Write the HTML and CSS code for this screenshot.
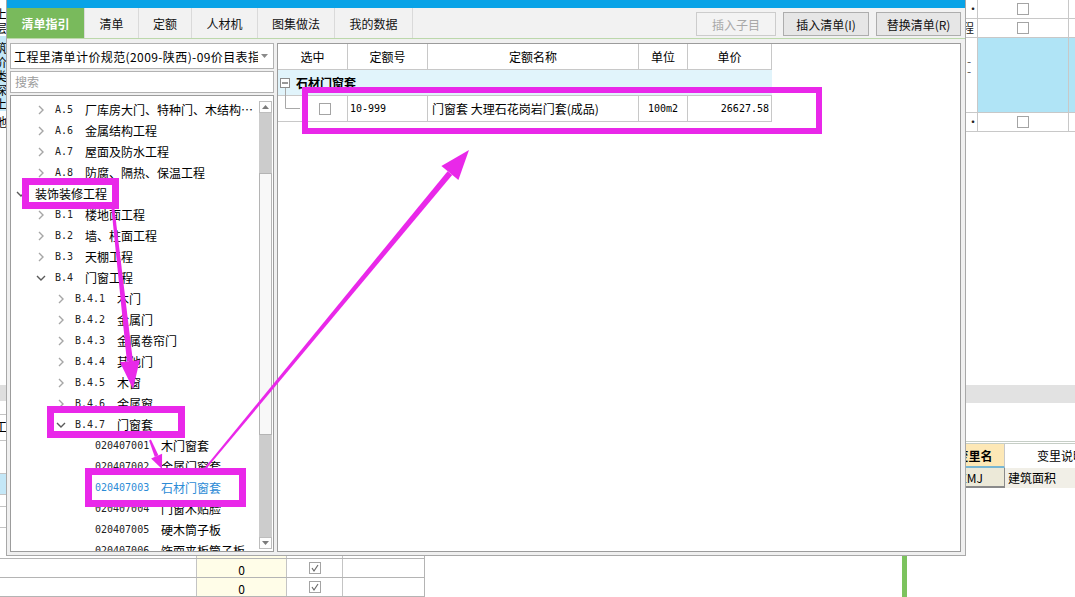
FILE: index.html
```html
<!DOCTYPE html>
<html lang="zh-CN">
<head>
<meta charset="utf-8">
<title>清单指引</title>
<link rel="stylesheet" href="styles.css">
</head>
<body>
<div class="screen">
  <div class="backdrop">
    <div class="bg-left">
      <div class="edge">
        <div class="edge-top"><span>上层</span></div>
        <div class="edge-blue"><span>筑价类深上</span></div>
        <div class="edge-plain"><span>地</span></div>
        <div class="edge-bar"></div>
        <div class="edge-line h14"></div>
        <div class="edge-line h26"><span>工</span></div>
        <div class="edge-line h33"></div>
        <div class="edge-line h21 blue"></div>
        <div class="edge-line h12"></div>
        <div class="edge-line h21"></div>
      </div>
    </div>

    <div class="bg-right">
      <div class="rt">
        <div class="rt-row r19"><div class="c0"></div><div class="c1">·</div><div class="c2"><span class="cb"></span></div><div class="c3"></div></div>
        <div class="rt-row r19"><div class="c0"></div><div class="c1 cut">程</div><div class="c2"><span class="cb"></span></div><div class="c3"></div></div>
        <div class="rt-row r75 sel"><div class="c0"></div><div class="c1 dash"><span>-</span><span>-</span></div><div class="c2"></div><div class="c3"></div></div>
        <div class="rt-row r19"><div class="c0"></div><div class="c1">·</div><div class="c2"><span class="cb"></span></div><div class="c3"></div></div>
      </div>
      <div class="rt-bar"></div>
      <div class="vars">
        <div class="vrow head"><div class="vname">变里名</div><div class="vdesc">变里说明</div></div>
        <div class="vrow data"><div class="vname">JZMJ</div><div class="vdesc">建筑面积</div></div>
      </div>
    </div>

    <div class="bg-bottom">
      <div class="bt">
        <div class="bt-row first">
          <div class="bc w1"></div>
          <div class="bc w2 yel"><span class="inner">0</span></div>
          <div class="bc w3"><span class="inner"><span class="cb on"><svg viewBox="0 0 10 10" width="10" height="10"><polyline points="2,5 4,8 8,2" fill="none" stroke="#6a6a6a" stroke-width="1.2"/></svg></span></span></div>
          <div class="bc w4"></div>
        </div>
        <div class="bt-row">
          <div class="bc w1"></div>
          <div class="bc w2 yel"><span class="val">0</span></div>
          <div class="bc w3"><span class="cb on"><svg viewBox="0 0 10 10" width="10" height="10"><polyline points="2,5 4,8 8,2" fill="none" stroke="#6a6a6a" stroke-width="1.2"/></svg></span></div>
          <div class="bc w4"></div>
        </div>
        <div class="bt-row">
          <div class="bc w1"></div>
          <div class="bc w2 yel"><span class="val">0</span></div>
          <div class="bc w3"><span class="cb on"><svg viewBox="0 0 10 10" width="10" height="10"><polyline points="2,5 4,8 8,2" fill="none" stroke="#6a6a6a" stroke-width="1.2"/></svg></span></div>
          <div class="bc w4"></div>
        </div>
      </div>
      <div class="green-line"></div>
    </div>
  </div>

  <div class="dialog">
    <div class="titlebar"></div>
    <div class="tabbar">
      <div class="tab active t1">清单指引</div>
      <div class="tab t2">清单</div>
      <div class="tab t3">定额</div>
      <div class="tab t4">人材机</div>
      <div class="tab t5">图集做法</div>
      <div class="tab t6">我的数据</div>
      <div class="actions">
        <button class="btn disabled b1">插入子目</button>
        <button class="btn b2">插入清单(I)</button>
        <button class="btn b3">替换清单(R)</button>
      </div>
    </div>
    <div class="body">
      <div class="left">
        <div class="combo">
          <span class="combo-text">工程里清单计价规范(2009-陕西)-09价目表指引</span>
          <svg class="combo-arrow" viewBox="0 0 7 4" width="7" height="4"><polygon points="0,0 7,0 3.5,4" fill="#8a8a8a"/></svg>
        </div>
        <div class="search">搜索</div>
        <div class="tree">
          <div class="tree-list">
            <div class="node l2"><svg class="chev" viewBox="0 0 12 12"><polyline points="4,2 8,6 4,10" /></svg><span class="code">A.5</span><span class="name">厂库房大门、特种门、木结构…</span></div>
            <div class="node l2"><svg class="chev" viewBox="0 0 12 12"><polyline points="4,2 8,6 4,10" /></svg><span class="code">A.6</span><span class="name">金属结构工程</span></div>
            <div class="node l2"><svg class="chev" viewBox="0 0 12 12"><polyline points="4,2 8,6 4,10" /></svg><span class="code">A.7</span><span class="name">屋面及防水工程</span></div>
            <div class="node l2"><svg class="chev" viewBox="0 0 12 12"><polyline points="4,2 8,6 4,10" /></svg><span class="code">A.8</span><span class="name">防腐、隔热、保温工程</span></div>
            <div class="node l1"><svg class="chev open" viewBox="0 0 12 12"><polyline points="2,4 6,8 10,4" /></svg><span class="name">装饰装修工程</span></div>
            <div class="node l2"><svg class="chev" viewBox="0 0 12 12"><polyline points="4,2 8,6 4,10" /></svg><span class="code">B.1</span><span class="name">楼地面工程</span></div>
            <div class="node l2"><svg class="chev" viewBox="0 0 12 12"><polyline points="4,2 8,6 4,10" /></svg><span class="code">B.2</span><span class="name">墙、柱面工程</span></div>
            <div class="node l2"><svg class="chev" viewBox="0 0 12 12"><polyline points="4,2 8,6 4,10" /></svg><span class="code">B.3</span><span class="name">天棚工程</span></div>
            <div class="node l2"><svg class="chev open" viewBox="0 0 12 12"><polyline points="2,4 6,8 10,4" /></svg><span class="code">B.4</span><span class="name">门窗工程</span></div>
            <div class="node l3"><svg class="chev" viewBox="0 0 12 12"><polyline points="4,2 8,6 4,10" /></svg><span class="code">B.4.1</span><span class="name">木门</span></div>
            <div class="node l3"><svg class="chev" viewBox="0 0 12 12"><polyline points="4,2 8,6 4,10" /></svg><span class="code">B.4.2</span><span class="name">金属门</span></div>
            <div class="node l3"><svg class="chev" viewBox="0 0 12 12"><polyline points="4,2 8,6 4,10" /></svg><span class="code">B.4.3</span><span class="name">金属卷帘门</span></div>
            <div class="node l3"><svg class="chev" viewBox="0 0 12 12"><polyline points="4,2 8,6 4,10" /></svg><span class="code">B.4.4</span><span class="name">其他门</span></div>
            <div class="node l3"><svg class="chev" viewBox="0 0 12 12"><polyline points="4,2 8,6 4,10" /></svg><span class="code">B.4.5</span><span class="name">木窗</span></div>
            <div class="node l3"><svg class="chev" viewBox="0 0 12 12"><polyline points="4,2 8,6 4,10" /></svg><span class="code">B.4.6</span><span class="name">金属窗</span></div>
            <div class="node l3"><svg class="chev open" viewBox="0 0 12 12"><polyline points="2,4 6,8 10,4" /></svg><span class="code">B.4.7</span><span class="name">门窗套</span></div>
            <div class="node l4"><span class="code">020407001</span><span class="name">木门窗套</span></div>
            <div class="node l4"><span class="code">020407002</span><span class="name">金属门窗套</span></div>
            <div class="node l4 selected"><span class="code">020407003</span><span class="name">石材门窗套</span></div>
            <div class="node l4"><span class="code">020407004</span><span class="name">门窗木贴脸</span></div>
            <div class="node l4"><span class="code">020407005</span><span class="name">硬木筒子板</span></div>
            <div class="node l4"><span class="code">020407006</span><span class="name">饰面夹板筒子板</span></div>
          </div>
          <div class="sb">
            <div class="sb-btn"><svg viewBox="0 0 7 4" width="7" height="4"><polygon points="0,4 7,4 3.5,0" fill="#7a7a7a"/></svg></div>
            <div class="sb-track">
              <div class="sb-pre"></div>
              <div class="sb-thumb"></div>
            </div>
            <div class="sb-btn"><svg viewBox="0 0 7 4" width="7" height="4"><polygon points="0,0 7,0 3.5,4" fill="#7a7a7a"/></svg></div>
          </div>
        </div>
      </div>
      <div class="right">
        <div class="grid head">
          <div>选中</div><div>定额号</div><div>定额名称</div><div>单位</div><div>单价</div>
        </div>
        <div class="group">
          <svg class="minus" viewBox="0 0 10 10" width="10" height="10"><rect x="0.5" y="0.5" width="9" height="9" fill="#fff" stroke="#8c8c8c"/><line x1="2" y1="5" x2="8" y2="5" stroke="#333"/></svg>
          <span class="group-title">石材门窗套</span>
          <span class="stem"></span>
        </div>
        <div class="grid row">
          <div class="sel-cell"><svg class="conn" viewBox="0 0 22 26" width="22" height="26"><polyline points="7.5,0 7.5,12.5 22,12.5" fill="none" stroke="#a8a8a8"/></svg><span class="cb"></span></div>
          <div class="num">10-999</div>
          <div class="txt">门窗套 大理石花岗岩门套(成品)</div>
          <div class="unit">100m2</div>
          <div class="price">26627.58</div>
        </div>
      </div>
    </div>
  </div>

  <svg class="annot" viewBox="0 0 1075 597" width="1075" height="597">
    <g fill="none" stroke="#e928e9">
      <rect x="305" y="90" width="514" height="41" stroke-width="6"/>
      <rect x="25.5" y="181.5" width="90" height="24" stroke-width="7"/>
      <rect x="50.5" y="409.5" width="131" height="25" stroke-width="7"/>
      <rect x="88.5" y="471.5" width="154" height="32" stroke-width="7"/>
    </g>
    <g fill="#e928e9">
      <polygon points="111.5,209.2 114.5,208.8 132.9,360.9 126.9,361.5"/>
      <polygon points="120,362.3 139.8,360.1 133,389"/>
      <polygon points="150.9,439.6 149.1,440.4 154.8,456.9 158.4,455.3"/>
      <polygon points="162.1,453.8 151.1,458.4 162,469"/>
      <polygon points="204.8,470.6 203.2,469.4 447.6,171.2 452.2,175"/>
      <polygon points="458.4,180.1 441.4,166.1 469,150"/>
    </g>
  </svg>
</div>
</body>
</html>
```
FILE: styles.css
```css
* { box-sizing: border-box; margin: 0; padding: 0; }
html, body { width: 1075px; height: 597px; overflow: hidden; background: #fff; }
body {
  font-family: "Noto Sans CJK SC", "Noto Sans", sans-serif;
  font-size: 12px;
  color: #000;
}
.screen { position: relative; width: 1075px; height: 597px; overflow: hidden; }

/* ---------- background application ---------- */
.backdrop {
  display: grid;
  grid-template-columns: 945px 130px;
  grid-template-rows: 555px 42px;
  width: 1075px;
  height: 597px;
}
.bg-left { grid-column: 1; grid-row: 1; overflow: hidden; }
.bg-right { grid-column: 2; grid-row: 1 / 3; overflow: hidden; display: flex; flex-direction: column; }
.bg-bottom { grid-column: 1; grid-row: 2; display: flex; overflow: hidden; }

.edge { width: 6px; height: 555px; overflow: hidden; display: flex; flex-direction: column; }
.edge span { display: block; margin-left: -5px; width: 12px; line-height: 14px; word-break: break-all; }
.edge-top { height: 36px; padding-top: 7px; }
.edge-blue { height: 75px; background: #c4e7f7; padding-top: 5px; }
.edge-plain { height: 20px; padding-top: 4px; }
.edge-bar { margin-top: 254px; height: 16px; background: #dedede; }
.edge-line { border-bottom: 1px solid #c4c4c4; }
.edge-line span { line-height: 24px; }
.edge-line.h14 { height: 14px; }
.edge-line.h26 { height: 26px; }
.edge-line.h33 { height: 33px; }
.edge-line.h21 { height: 21px; }
.edge-line.h12 { height: 12px; }
.edge-line.blue { background: #c4e7f7; }

.rt { display: flex; flex-direction: column; }
.rt-row { display: flex; border-bottom: 1px solid #c8c8c8; }
.rt-row.r19 { height: 19px; }
.rt-row.r75 { height: 75px; }
.rt-row .c0 { width: 21px; border-right: 1px solid #c8c8c8; }
.rt-row .c1 { width: 12px; border-right: 1px solid #c8c8c8; line-height: 18px; padding-left: 1px; overflow: hidden; color: #222; }
.rt-row .c1.cut { text-indent: -5px; }
.rt-row .c1.dash { display: flex; flex-direction: column; padding-top: 18px; line-height: 10px; color: #555; }
.rt-row .c2 { width: 91px; border-right: 1px solid #c8c8c8; display: flex; align-items: center; justify-content: center; }
.rt-row .c3 { flex: 1; }
.rt-row.sel .c2, .rt-row.sel .c3 { background: #b0e4f6; }
.rt-bar { margin-top: 253px; height: 18px; background: #e2e2e2; }
.vars { margin-top: 38px; border-top: 3px double #c6cec6; }
.vrow { display: flex; width: 172px; }
.vrow.head { height: 24px; }
.vrow.data { height: 20px; background: #f1efe7; }
.vname { width: 60px; flex: none; border-right: 1px solid #c8c8c8; }
.vdesc { width: 112px; flex: none; }
.head .vname { background: #fde8b6; font-weight: bold; text-align: center; line-height: 23px; font-size: 12px; border-bottom: 2px solid #78b6d2; }
.head .vdesc { text-align: center; line-height: 23px; background: #fff; }
.data .vname { background: #ece9d8; padding-left: 8px; line-height: 19px; border-right: 1px solid #8a8a8a; border-bottom: 2px solid #8a8a8a; }
.data .vdesc { padding-left: 3px; line-height: 19px; }

.cb { display: inline-flex; align-items: center; justify-content: center; width: 12px; height: 12px; border: 1px solid #a4a4a4; background: #fff; flex: none; }

.bt { width: 425px; flex: none; display: flex; flex-direction: column; }
.bt-row { display: flex; height: 19px; border-bottom: 1px solid #b4b4b4; }
.bt-row.first { height: 9px; overflow: hidden; }
.bc { display: flex; align-items: center; justify-content: center; height: 100%; border-right: 1px solid #c4c4c4; }
.bc .val { padding-top: 2px; }
.bt-row.first .bc { align-items: flex-end; }
.bt-row.first .inner { display: flex; align-items: center; justify-content: center; height: 19px; flex: none; }
.bc.w1 { width: 197px; }
.bc.w2 { width: 90px; }
.bc.w3 { width: 56px; }
.bc.w4 { width: 82px; border-right: 1px solid #b4b4b4; }
.bc.yel { background: #fffde8; }
.green-line { margin-left: 477px; width: 5px; background: #7cc35e; }

/* ---------- dialog window ---------- */
.dialog {
  position: absolute;
  left: 6px;
  top: 0;
  width: 960px;
  height: 556px;
  background: #f0f0f0;
  border-left: 1px solid #a8a8a8;
  border-right: 1px solid #a8a8a8;
  border-bottom: 1px solid #a8a8a8;
  display: flex;
  flex-direction: column;
}
.titlebar { height: 8px; background: #09a3e7; flex: none; }
.tabbar {
  height: 31px;
  flex: none;
  display: flex;
  border-bottom: 1px solid #bcd8ab;
  background: #f2f2f2;
}
.tab {
  display: flex;
  align-items: center;
  justify-content: center;
  border-right: 1px solid #dadada;
  color: #111;
  font-size: 12px;
}
.tab.active { background: #79ba5c; color: #fff; font-weight: bold; }
.t1 { width: 78px; }
.t2 { width: 54px; }
.t3 { width: 53px; }
.t4 { width: 66px; }
.t5 { width: 77px; }
.t6 { width: 78px; }
.actions { margin-left: auto; display: flex; align-items: center; gap: 7px; padding-right: 4px; padding-top: 2px; }
.btn {
  height: 24px;
  border: 1px solid #adadad;
  background: #e6e6e6;
  font-family: "Noto Sans CJK SC", "Noto Sans", sans-serif;
  font-size: 12px;
  color: #111;
}
.btn.disabled { color: #a8a8a8; border-color: #cccccc; background: #f3f3f3; }
.b1 { width: 80px; }
.b2 { width: 86px; }
.b3 { width: 85px; }

.body { flex: 1; display: flex; gap: 3px; padding: 4px 4px 3px 3px; min-height: 0; }
.left { width: 264px; flex: none; display: flex; flex-direction: column; gap: 2px; }
.combo {
  height: 26px;
  flex: none;
  background: #fff;
  border: 1px solid #b2b2b2;
  display: flex;
  align-items: center;
  padding-left: 3px;
  padding-right: 5px;
}
.combo-text { flex: 1; min-width: 0; overflow: hidden; white-space: nowrap; letter-spacing: 0.4px; }
.combo-arrow { flex: none; margin-left: 3px; }
.search {
  height: 22px;
  flex: none;
  background: #fff;
  border: 1px solid #b2b2b2;
  color: #9c9c9c;
  line-height: 20px;
  padding-left: 4px;
}
.tree { flex: 1; min-height: 0; display: flex; background: #fff; border: 1px solid #9c9c9c; }
.tree-list { flex: 1; min-width: 0; overflow: hidden; padding-top: 3px; }
.node { height: 21px; display: flex; align-items: center; white-space: nowrap; }
.chev { width: 12px; height: 12px; flex: none; margin-right: 8px; fill: none; stroke: #a6a6a6; stroke-width: 1.4; }
.chev.open { stroke: #5a5a5a; }
.code { font-family: "DejaVu Sans Mono", "Liberation Mono", monospace; font-size: 10px; flex: none; color: #222; }
.name { overflow: hidden; text-overflow: ellipsis; }
.l1 { padding-left: 4px; }
.l2 { padding-left: 24px; }
.l3 { padding-left: 44px; }
.l4 { padding-left: 84px; }
.l2 .code { width: 30px; }
.l3 .code { width: 42px; }
.l4 .code { width: 66px; }
.node.selected .code, .node.selected .name { color: #2c8bd6; }

.sb { width: 15px; flex: none; display: flex; flex-direction: column; padding: 5px 1px 2px 1px; background: #fff; }
.sb-btn { height: 12px; flex: none; border: 1px solid #bdbdbd; background: #fdfdfd; display: flex; align-items: center; justify-content: center; }
.sb-track { flex: 1; background: #cccccc; display: flex; flex-direction: column; }
.sb-pre { height: 60px; }
.sb-thumb { height: 262px; background: #f8f8f8; border: 1px solid #b4b4b4; }

.right { flex: 1; min-width: 0; background: #fff; border: 1px solid #9c9c9c; }
.grid { display: grid; grid-template-columns: 70px 80px 211px 49px 84px; width: 494px; }
.grid > div { height: 26px; border-right: 1px solid #c8c8c8; border-bottom: 1px solid #c8c8c8; display: flex; align-items: center; }
.grid.head > div { justify-content: center; }
.group {
  width: 494px;
  height: 26px;
  background: #e1f4fb;
  border-bottom: 1px solid #c8c8c8;
  display: flex;
  align-items: center;
  padding-left: 2px;
  position: relative;
}
.minus { flex: none; }
.group-title { margin-left: 6px; font-weight: bold; }
.stem { position: absolute; left: 7px; top: 18px; width: 1px; height: 8px; background: #a8a8a8; }
.grid.row .sel-cell { padding-left: 0; align-items: flex-start; }
.sel-cell .conn { flex: none; }
.sel-cell .cb { margin-left: 19px; margin-top: 7px; }
.num { padding-left: 2px; font-family: "DejaVu Sans Mono", "Liberation Mono", monospace; font-size: 10px; }
.txt { padding-left: 4px; }
.unit { justify-content: center; font-family: "DejaVu Sans Mono", "Liberation Mono", monospace; font-size: 10px; }
.price { justify-content: flex-end; padding-right: 2px; font-family: "DejaVu Sans Mono", "Liberation Mono", monospace; font-size: 10px; }

/* ---------- annotation overlay ---------- */
.annot { position: absolute; left: 0; top: 0; pointer-events: none; }
```
